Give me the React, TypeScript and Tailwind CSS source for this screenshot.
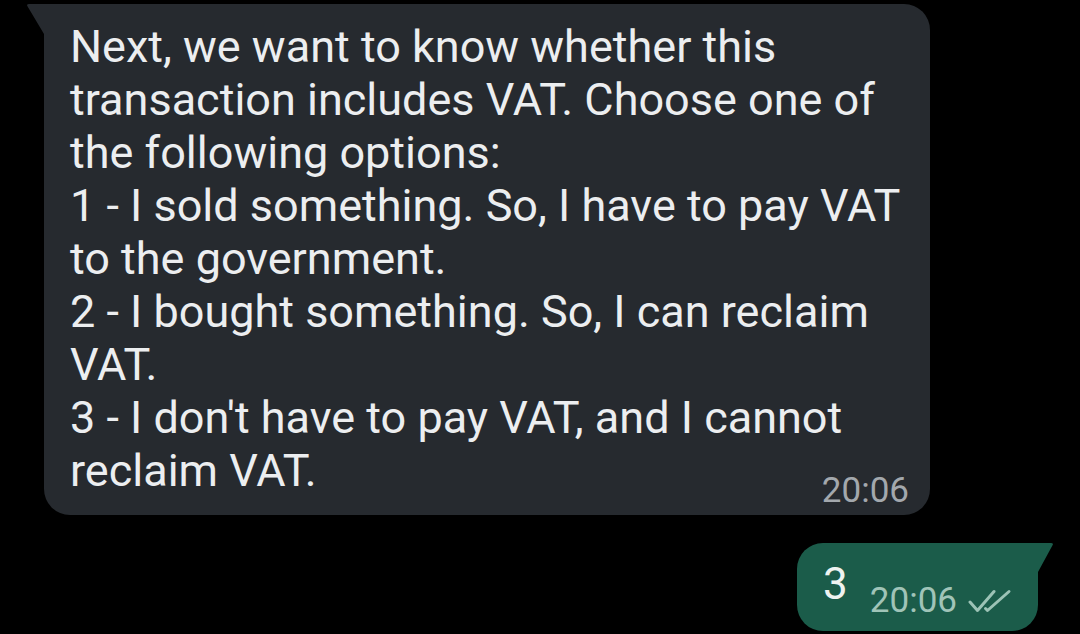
import type { ReactNode } from "react";

const lines = [
  "Next, we want to know whether this",
  "transaction includes VAT. Choose one of",
  "the following options:",
  "1 - I sold something. So, I have to pay VAT",
  "to the government.",
  "2 - I bought something. So, I can reclaim",
  "VAT.",
  "3 - I don't have to pay VAT, and I cannot",
  "reclaim VAT.",
];

function DoubleCheck() {
  return (
    <svg
      viewBox="0 0 44 24"
      className="h-[24px] w-[44px]"
      fill="none"
      stroke="#9cc3b6"
      strokeWidth={3}
      strokeLinecap="round"
      strokeLinejoin="round"
    >
      <path d="M2 13 L9.5 21.5 L26 2.5" />
      <path d="M17.5 19.5 L19.5 21.5 L41 2.5" />
    </svg>
  );
}

function Bubble({
  side,
  children,
}: {
  side: "in" | "out";
  children: ReactNode;
}) {
  if (side === "in") {
    return (
      <div className="relative ml-[44px] w-[886px] rounded-[26px] rounded-tl-none bg-[#262a2f]">
        <svg
          viewBox="0 0 18 30"
          className="absolute -left-[18px] top-0 h-[30px] w-[18px]"
        >
          <path d="M18 0 L3 0 Q0 0 1.6 2.6 L18 30 Z" fill="#262a2f" />
        </svg>
        {children}
      </div>
    );
  }
  return (
    <div className="relative mr-[42px] rounded-[26px] rounded-tr-none bg-[#1b5c4a]">
      <svg
        viewBox="0 0 16 29"
        className="absolute -right-[16px] top-0 h-[29px] w-[16px]"
      >
        <path d="M0 0 L13 0 Q16 0 14.4 2.6 L0 29 Z" fill="#1b5c4a" />
      </svg>
      {children}
    </div>
  );
}

export default function App() {
  return (
    <div
      className="flex h-[634px] w-[1080px] flex-col overflow-hidden bg-black pt-[4px]"
      style={{ fontFamily: "Roboto, 'Noto Sans', sans-serif" }}
    >
      <Bubble side="in">
        <div className="pl-[26px] pr-[21px] pt-[16px] pb-[7px]">
          <div className="text-[45px] leading-[53px] text-[#eceef0]">
            {lines.map((l) => (
              <div key={l} className="whitespace-nowrap">
                {l}
              </div>
            ))}
          </div>
          <div className="-mt-[24px] flex justify-end">
            <span className="text-[35px] leading-[35px] text-[#a3a8ad]">
              20:06
            </span>
          </div>
        </div>
      </Bubble>

      <div className="mt-[28px] flex justify-end">
        <Bubble side="out">
          <div className="flex items-start pl-[26px] pr-[26px] pt-[20px] pb-[12px]">
            <span className="text-[44px] leading-[43px] text-[#eef3f1]">3</span>
            <div className="ml-[22px] mt-[20px] flex items-center gap-[11px]">
              <span className="text-[35px] leading-[36px] text-[#a0c4b8]">
                20:06
              </span>
              <DoubleCheck />
            </div>
          </div>
        </Bubble>
      </div>
    </div>
  );
}
